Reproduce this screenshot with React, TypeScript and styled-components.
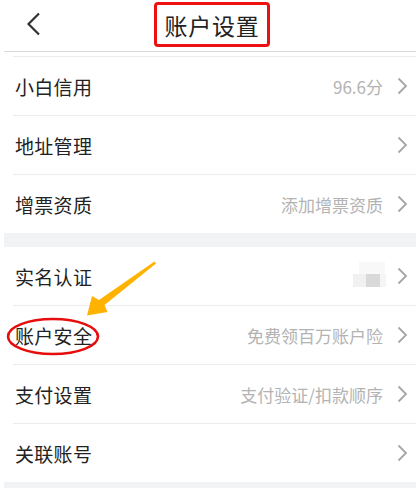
import React from "react";
import styled, { createGlobalStyle } from "styled-components";

const Global = createGlobalStyle`
  html, body { margin: 0; padding: 0; background: #fff; }
  body { font-family: "Noto Sans CJK SC", "Noto Sans", sans-serif; }
`;

const Page = styled.div`
  position: relative;
  width: 416px;
  height: 488px;
  overflow: hidden;
  background: #fff;
`;

const Content = styled.div`
  margin-left: 4px;
  display: flex;
  flex-direction: column;
`;

const Header = styled.header`
  position: relative;
  height: 52px;
  box-sizing: border-box;
  border-bottom: 1px solid #d9d9d9;
  display: flex;
  justify-content: center;
  align-items: flex-start;
  padding-top: 2px;
`;

const BackButton = styled.div`
  position: absolute;
  left: 22px;
  top: 12px;
  width: 16px;
  height: 24px;
  display: flex;
  align-items: center;
`;

const Title = styled.h1`
  margin: 0;
  margin-left: 4px;
  box-sizing: border-box;
  height: 45px;
  width: 116px;
  border: 3px solid #ee1111;
  border-radius: 4px;
  display: flex;
  align-items: center;
  justify-content: center;
  font-size: 23px;
  font-weight: 400;
  color: #222;
  letter-spacing: 0.8px;
`;

const TopEdge = styled.div`
  height: 4px;
  margin-left: 9px;
  border-bottom: 1px solid #ececec;
`;

const Group = styled.div`
  display: flex;
  flex-direction: column;
`;

const Row = styled.div<{ $last?: boolean }>`
  height: 58px;
  margin-left: 9px;
  padding-left: 2px;
  padding-right: 8px;
  display: flex;
  align-items: center;
  border-bottom: ${(p) => (p.$last ? "none" : "1px solid #ececec")};
`;

const Label = styled.span`
  flex: 1;
  font-size: 19px;
  color: #222;
  letter-spacing: 0.3px;
`;

const Value = styled.span`
  font-size: 17px;
  color: #b3b3b3;
  margin-right: 14px;
`;

const Blur = styled.div`
  position: relative;
  width: 34px;
  height: 28px;
  margin-right: 10px;
`;

const BlurCell = styled.div<{ $x: number; $y: number; $w: number; $h: number; $c: string }>`
  position: absolute;
  left: ${(p) => p.$x}px;
  top: ${(p) => p.$y}px;
  width: ${(p) => p.$w}px;
  height: ${(p) => p.$h}px;
  background: ${(p) => p.$c};
`;

const Band = styled.div<{ $h: number }>`
  height: ${(p) => p.$h}px;
  background: #f1f3f5;
`;

const Overlay = styled.svg`
  position: absolute;
  left: 0;
  top: 0;
  pointer-events: none;
`;

const Chevron = () => (
  <svg width="11" height="18" viewBox="0 0 11 18">
    <path d="M1.5 1.5 L9 9 L1.5 16.5" fill="none" stroke="#a6a6a6" strokeWidth="1.8" />
  </svg>
);

const BackIcon = () => (
  <svg width="16" height="24" viewBox="0 0 16 24">
    <path d="M13 1.5 L2.5 12 L13 22.5" fill="none" stroke="#333" strokeWidth="2.2" />
  </svg>
);

type Item = { label: string; value?: string; blur?: boolean };

const groupA: Item[] = [
  { label: "小白信用", value: "96.6分" },
  { label: "地址管理" },
  { label: "增票资质", value: "添加增票资质" },
];

const groupB: Item[] = [
  { label: "实名认证", blur: true },
  { label: "账户安全", value: "免费领百万账户险" },
  { label: "支付设置", value: "支付验证/扣款顺序" },
  { label: "关联账号" },
];

const renderRow = (it: Item, i: number, arr: Item[]) => (
  <Row key={it.label} $last={i === arr.length - 1}>
    <Label>{it.label}</Label>
    {it.value && <Value>{it.value}</Value>}
    {it.blur && (
      <Blur>
        <BlurCell $x={6} $y={0} $w={26} $h={12} $c="#f8f8f8" />
        <BlurCell $x={0} $y={12} $w={14} $h={13} $c="#f1f1f1" />
        <BlurCell $x={13} $y={12} $w={14} $h={13} $c="#d9d9d9" />
        <BlurCell $x={27} $y={12} $w={6} $h={13} $c="#f5f5f5" />
      </Blur>
    )}
    <Chevron />
  </Row>
);

export default function App() {
  return (
    <>
      <Global />
      <Page>
        <Content>
          <Header>
            <BackButton>
              <BackIcon />
            </BackButton>
            <Title>账户设置</Title>
          </Header>
          <TopEdge />
          <Group>{groupA.map(renderRow)}</Group>
          <Band $h={14} />
          <Group>{groupB.map(renderRow)}</Group>
          <Band $h={20} />
        </Content>
        <Overlay width="416" height="488" viewBox="0 0 416 488">
          <ellipse cx="53" cy="336.5" rx="45" ry="17.5" fill="none" stroke="#e60d0d" strokeWidth="2.6" />
          <polygon
            points="156,263.5 104.5,305 107.5,312 87,315.5 92,296 99,300 154.5,261.5"
            fill="#ffb300"
          />
        </Overlay>
      </Page>
    </>
  );
}
